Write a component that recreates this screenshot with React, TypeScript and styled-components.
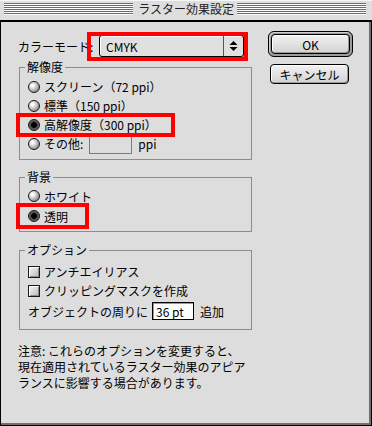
import React from "react";
import styled, { createGlobalStyle } from "styled-components";

const FONT = `"Noto Sans CJK JP", "Noto Sans", sans-serif`;

const Global = createGlobalStyle`
  html, body { margin: 0; padding: 0; background: #000; }
  body { width: 372px; height: 426px; overflow: hidden; }
  * { box-sizing: border-box; }
`;

const Window = styled.div`
  width: 372px;
  height: 426px;
  display: flex;
  flex-direction: column;
  background: #dddddd;
  font-family: ${FONT};
  font-size: 12px;
  color: #000;
`;

const TitleBar = styled.div`
  height: 22px;
  flex: none;
  display: flex;
  align-items: center;
  padding: 0 6px 2px 4px;
  background: #dedede;
  border-bottom: 2px solid #000;
  box-shadow: inset 0 1px 0 #f6f6f6;
`;

const Stripes = styled.div`
  flex: 1;
  height: 12px;
  background: repeating-linear-gradient(to bottom, #6c6c6c 0 1px, #fbfbfb 1px 2px);
`;

const Title = styled.div`
  margin: 0 3px 0 5px;
  line-height: 20px;
  white-space: nowrap;
  color: #222;
`;

const Body = styled.div`
  flex: 1;
  display: flex;
  gap: 16px;
  padding: 11px 0 0 17px;
  border: 1px solid #000;
  border-top: none;
  box-shadow: inset -2px -2px 0 #6f6f6f;
`;

const LeftCol = styled.div`
  width: 234px;
  flex: none;
  display: flex;
  flex-direction: column;
  padding-top: 2px;
`;

const ModeRow = styled.div`
  display: flex;
  align-items: center;
  height: 22px;
`;

const ModeLabel = styled.span`
  width: 81px;
  flex: none;
  white-space: nowrap;
`;

const Anchor = styled.div`
  position: relative;
`;

const SelectBox = styled.div`
  width: 145px;
  height: 22px;
  border: 1px solid #000;
  border-radius: 3px;
  display: flex;
  background: #e0e0e0;
  box-shadow: inset 1px 1px 0 #fff, 1px 1px 0 #9a9a9a;
`;

const SelectValue = styled.span`
  flex: 1;
  display: flex;
  align-items: center;
  padding-left: 6px;
`;

const SelectArrow = styled.span`
  width: 20px;
  display: flex;
  align-items: center;
  justify-content: center;
  border-left: 1px solid #555;
`;

const Highlight = styled.div<{ $l: number; $t: number; $w: number; $h: number }>`
  position: absolute;
  left: ${(p) => p.$l}px;
  top: ${(p) => p.$t}px;
  width: ${(p) => p.$w}px;
  height: ${(p) => p.$h}px;
  border: 4px solid #ff0000;
  pointer-events: none;
  z-index: 2;
`;

const Group = styled.fieldset<{ $mt: number; $pt: number; $pb: number }>`
  margin: ${(p) => p.$mt}px 0 0 1px;
  padding: ${(p) => p.$pt}px 0 ${(p) => p.$pb}px 5px;
  border: 1px solid #8c8c8c;
  width: 233px;
  min-width: 0;
`;

const Legend = styled.legend`
  padding: 0 2px;
  line-height: 14px;
  font-size: 12px;
`;

const Rows = styled.div`
  display: flex;
  flex-direction: column;
`;

const Row = styled.div<{ $h: number }>`
  position: relative;
  display: flex;
  align-items: center;
  gap: 4px;
  height: ${(p) => p.$h}px;
  margin-left: 3px;
  white-space: nowrap;
`;

const Radio = styled.span<{ $on?: boolean }>`
  width: 12px;
  height: 12px;
  flex: none;
  border-radius: 50%;
  border: 1px solid #1a1a1a;
  background: ${(p) =>
    p.$on
      ? "radial-gradient(circle at 50% 50%, #000 0 2.6px, #505050 3.2px 4px, #6a6a6a 5px)"
      : "radial-gradient(circle at 35% 35%, #fff 0 1px, #dadada 3px, #8c8c8c 7px)"};
`;

const Check = styled.span`
  width: 12px;
  height: 12px;
  flex: none;
  border: 1px solid #1a1a1a;
  background: linear-gradient(135deg, #f8f8f8, #b8b8b8);
  box-shadow: inset 1px 1px 0 #fff, inset -1px -1px 0 #8a8a8a;
`;

const DimField = styled.span`
  width: 43px;
  height: 21px;
  margin: -1px 0 -1px 2px;
  border: 1px solid #7c7c7c;
  background: #dddddd;
`;

const Unit = styled.span`
  margin-left: 2px;
`;

const ValueField = styled.span`
  width: 42px;
  height: 18px;
  border: 1px solid #000;
  background: #fff;
  box-shadow: inset 1px 1px 0 #999;
  display: flex;
  align-items: center;
  padding-left: 3px;
`;

const After = styled.span`
  margin-left: 2px;
`;

const Note = styled.p`
  margin: 13px 0 0 0;
  line-height: 16px;
  white-space: nowrap;
`;

const RightCol = styled.div`
  display: flex;
  flex-direction: column;
  align-items: flex-start;
  gap: 7px;
  margin-top: -2px;
`;

const DefaultRing = styled.div`
  width: 85px;
  height: 26px;
  border: 1px solid #000;
  border-radius: 6px;
  padding: 2px;
  background: #9c9c9c;
  box-shadow: inset 1px 1px 0 #cfcfcf;
`;

const Button = styled.button<{ $ml?: number }>`
  width: 79px;
  height: 20px;
  margin: 0 0 0 ${(p) => p.$ml ?? 0}px;
  padding: 0;
  border: 1px solid #000;
  border-radius: 4px;
  background: linear-gradient(#f2f2f2, #d2d2d2);
  box-shadow: inset 1px 1px 0 #fff, inset -1px -1px 0 #9a9a9a;
  font-family: ${FONT};
  font-size: 12px;
  color: #000;
  display: flex;
  align-items: center;
  justify-content: center;
`;

const Arrows = () => (
  <svg width="9" height="12" viewBox="0 0 9 12">
    <path d="M0.5 5 L4.5 1 L8.5 5 Z" fill="#000" />
    <path d="M0.5 7 L8.5 7 L4.5 11 Z" fill="#000" />
  </svg>
);

export default function App() {
  return (
    <>
      <Global />
      <Window>
        <TitleBar>
          <Stripes />
          <Title>ラスター効果設定</Title>
          <Stripes />
        </TitleBar>
        <Body>
          <LeftCol>
            <ModeRow>
              <ModeLabel>カラーモード:</ModeLabel>
              <Anchor>
                <SelectBox>
                  <SelectValue>CMYK</SelectValue>
                  <SelectArrow>
                    <Arrows />
                  </SelectArrow>
                </SelectBox>
                <Highlight $l={-12} $t={-3} $w={161} $h={29} />
              </Anchor>
            </ModeRow>

            <Group $mt={3} $pt={3} $pb={6}>
              <Legend>解像度</Legend>
              <Rows>
                <Row $h={19}>
                  <Radio />
                  <span>スクリーン（72 ppi）</span>
                </Row>
                <Row $h={19}>
                  <Radio />
                  <span>標準（150 ppi）</span>
                </Row>
                <Row $h={19}>
                  <Radio $on />
                  <span>高解像度（300 ppi）</span>
                  <Highlight $l={-12} $t={-2} $w={159} $h={24} />
                </Row>
                <Row $h={19}>
                  <Radio />
                  <span>その他:</span>
                  <DimField />
                  <Unit>ppi</Unit>
                </Row>
              </Rows>
            </Group>

            <Group $mt={10} $pt={2} $pb={5}>
              <Legend>背景</Legend>
              <Rows>
                <Row $h={20}>
                  <Radio />
                  <span>ホワイト</span>
                </Row>
                <Row $h={20}>
                  <Radio $on />
                  <span>透明</span>
                  <Highlight $l={-12} $t={-3} $w={73} $h={26} />
                </Row>
              </Rows>
            </Group>

            <Group $mt={11} $pt={5} $pb={7}>
              <Legend>オプション</Legend>
              <Rows>
                <Row $h={19}>
                  <Check />
                  <span>アンチエイリアス</span>
                </Row>
                <Row $h={19}>
                  <Check />
                  <span>クリッピングマスクを作成</span>
                </Row>
                <Row $h={22}>
                  <span>オブジェクトの周りに</span>
                  <ValueField>36 pt</ValueField>
                  <After>追加</After>
                </Row>
              </Rows>
            </Group>

            <Note>
              注意: これらのオプションを変更すると、
              <br />
              現在適用されているラスター効果のアピア
              <br />
              ランスに影響する場合があります。
            </Note>
          </LeftCol>

          <RightCol>
            <DefaultRing>
              <Button>OK</Button>
            </DefaultRing>
            <Button $ml={2}>キャンセル</Button>
          </RightCol>
        </Body>
      </Window>
    </>
  );
}
